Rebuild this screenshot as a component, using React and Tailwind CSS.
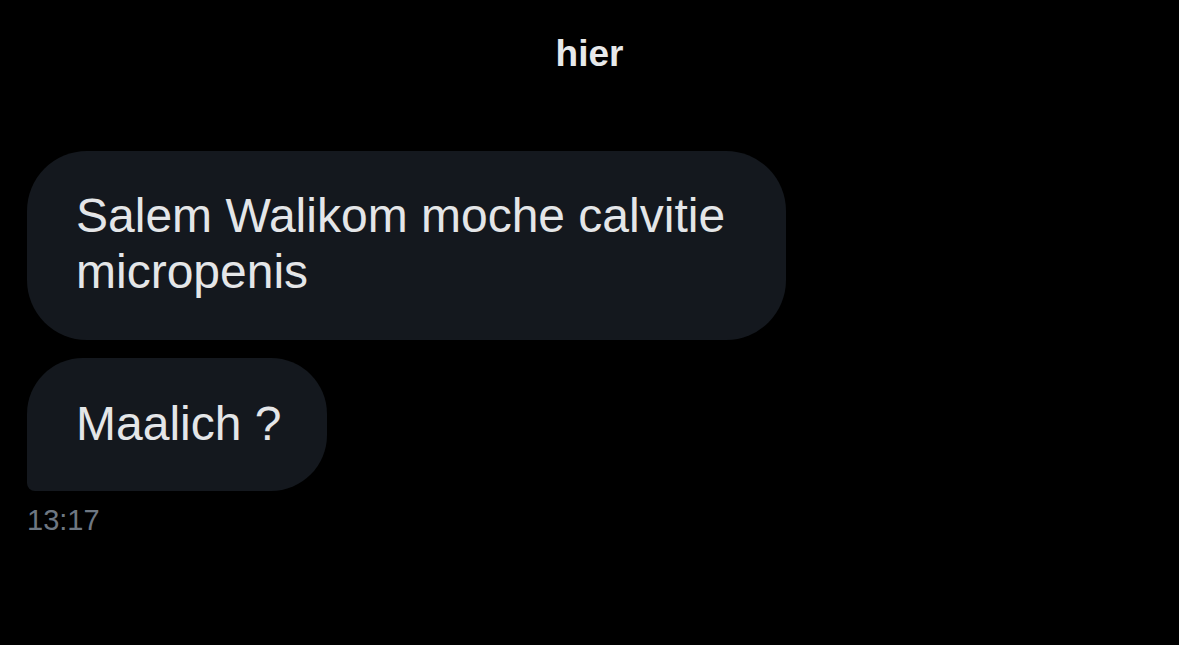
export default function App() {
    const font = { fontFamily: '"Liberation Sans", Arial, sans-serif' };

    return (
        <div className="min-h-[645px] w-full bg-black text-[#e4e6e8]" style={font}>
            <div className="pt-[32px] text-center text-[37px] leading-[44px] font-bold text-[#e7e9ea]">hier</div>

            <div className="mt-[75px] pl-[27px] flex flex-col items-start">
                <div className="w-[759px] bg-[#14181e] rounded-[60px] px-[49px] pt-[37px] pb-[40px] text-[48px] leading-[56px]">
                    Salem Walikom moche calvitie micropenis
                </div>
                <div className="mt-[18px] bg-[#14181e] rounded-[56px] rounded-bl-[8px] pl-[49px] pr-[46px] pt-[38px] pb-[39px] text-[48px] leading-[56px]">
                    Maalich ?
                </div>
                <div className="mt-[12px] text-[29px] leading-[34px] text-[#6e7782]">13:17</div>
            </div>
        </div>
    );
}
